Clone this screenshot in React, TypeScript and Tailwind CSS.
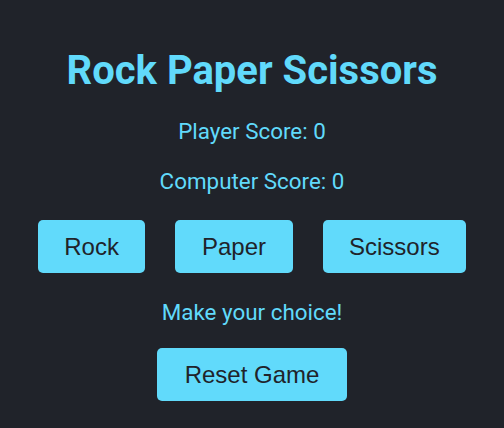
import { useState } from "react";

const choices = ["Rock", "Paper", "Scissors"];

export default function App() {
  const [playerScore, setPlayerScore] = useState(0);
  const [computerScore, setComputerScore] = useState(0);
  const [message, setMessage] = useState("Make your choice!");

  const play = (choice: string) => {
    const comp = choices[Math.floor(Math.random() * 3)];
    if (comp === choice) {
      setMessage(`Tie! Both chose ${choice}`);
      return;
    }
    const wins =
      (choice === "Rock" && comp === "Scissors") ||
      (choice === "Paper" && comp === "Rock") ||
      (choice === "Scissors" && comp === "Paper");
    if (wins) {
      setPlayerScore((s) => s + 1);
      setMessage(`You win! ${choice} beats ${comp}`);
    } else {
      setComputerScore((s) => s + 1);
      setMessage(`You lose! ${comp} beats ${choice}`);
    }
  };

  const reset = () => {
    setPlayerScore(0);
    setComputerScore(0);
    setMessage("Make your choice!");
  };

  return (
    <div className="min-h-screen bg-[#20232a] text-[#61dafb] font-['Roboto',sans-serif] text-center pt-[42px]">
      <h1 className="text-[40px] leading-[57px] font-bold">Rock Paper Scissors</h1>
      <p className="mt-[17px] text-[22.4px] leading-[30px]">Player Score: {playerScore}</p>
      <p className="mt-[20px] text-[22.4px] leading-[30px]">Computer Score: {computerScore}</p>
      <div className="mt-[24px] flex justify-center gap-[30px]">
        {choices.map((c) => (
          <button
            key={c}
            onClick={() => play(c)}
            className="h-[53px] px-[26.5px] rounded-[5px] bg-[#61dafb] text-[#20232a] text-[24px] font-['Liberation_Sans',Arial,sans-serif]"
          >
            {c}
          </button>
        ))}
      </div>
      <p className="mt-[24px] text-[22.4px] leading-[30px]">{message}</p>
      <button
        onClick={reset}
        className="mt-[21px] h-[53px] px-[28px] rounded-[5px] bg-[#61dafb] text-[#20232a] text-[24px] font-['Liberation_Sans',Arial,sans-serif]"
      >
        Reset Game
      </button>
    </div>
  );
}
